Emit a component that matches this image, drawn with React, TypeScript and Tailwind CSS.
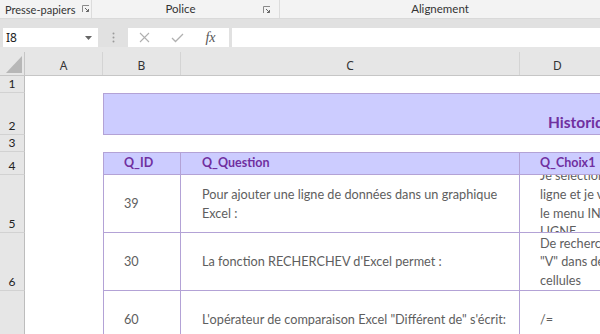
import React from "react";

const P = "border-[#b3a2d6]";

function Launcher() {
  return (
    <svg width="8" height="8" viewBox="0 0 8 8" className="block shrink-0">
      <path d="M0.5 7V0.5H7" fill="none" stroke="#8a8a8a" strokeWidth="1" />
      <path d="M3 3L6.5 6.5M4 6.5H6.5V4" fill="none" stroke="#666" strokeWidth="1" />
    </svg>
  );
}

function RowHead({ h, n }: { h: number; n: string }) {
  return (
    <div
      className="w-[25px] shrink-0 bg-[#e6e6e6] border-r border-r-[#bdbdbd] border-b border-b-[#d2d2d2] flex items-end justify-center text-[12px] leading-none text-[#222] pb-[2px]"
      style={{ height: h }}
    >
      {n}
    </div>
  );
}

const dataText = "text-[12.7px] leading-[18.6px] text-[#5e5e5e]";

export default function App() {
  return (
    <div
      className="w-[600px] h-[334px] overflow-hidden bg-white relative"
      style={{ fontFamily: "'Noto Sans', 'Open Sans', sans-serif" }}
    >
      {/* ribbon group labels */}
      <div
        className="h-[18px] bg-[#f3f3f3] flex text-[11px] leading-none text-[#333]"
        style={{ fontFamily: "Lato, 'Noto Sans', sans-serif" }}
      >
        <div className="w-[92px] shrink-0 flex items-center pl-[5px] border-r border-[#dcdcdc] gap-[6px] whitespace-nowrap overflow-hidden">
          <span>Presse-papiers</span>
          <Launcher />
        </div>
        <div className="w-[188px] shrink-0 flex items-center border-r border-[#dcdcdc] relative">
          <span className="flex-1 text-center pr-[10px] text-[11.5px]">Police</span>
          <div className="absolute right-[8px] top-[6px]">
            <Launcher />
          </div>
        </div>
        <div className="flex-1 flex items-center justify-center text-[11.5px]">Alignement</div>
      </div>
      <div className="h-[10px] bg-[#e1e1e1] border-t border-[#d9d9d9]" />
      {/* formula bar */}
      <div className="h-[19px] bg-[#e1e1e1] flex">
        <div className="ml-[3px] w-[95px] bg-white flex items-center justify-between pl-[3px] pr-[6px] text-[12px] text-[#222]">
          <span>I8</span>
          <svg width="7" height="4" viewBox="0 0 7 4">
            <path d="M0 0H7L3.5 4Z" fill="#666" />
          </svg>
        </div>
        <div className="w-[30px] flex items-center justify-center">
          <svg width="3" height="11" viewBox="0 0 3 11">
            <circle cx="1.5" cy="1.5" r="1" fill="#9a9a9a" />
            <circle cx="1.5" cy="5.5" r="1" fill="#9a9a9a" />
            <circle cx="1.5" cy="9.5" r="1" fill="#9a9a9a" />
          </svg>
        </div>
        <div className="w-[101px] bg-white flex items-center">
          <div className="w-[33px] flex justify-center">
            <svg width="11" height="11" viewBox="0 0 11 11">
              <path d="M1 1L10 10M10 1L1 10" stroke="#b0b0b0" strokeWidth="1.1" />
            </svg>
          </div>
          <div className="w-[33px] flex justify-center">
            <svg width="13" height="10" viewBox="0 0 13 10">
              <path d="M1 5L4.5 8.5L12 1" fill="none" stroke="#b0b0b0" strokeWidth="1.3" />
            </svg>
          </div>
          <div
            className="w-[33px] flex justify-center text-[14px] italic text-[#555] leading-none"
            style={{ fontFamily: "'Liberation Serif', serif" }}
          >
            fx
          </div>
        </div>
        <div className="ml-[3px] flex-1 bg-white" />
      </div>
      <div className="h-[5px] bg-[#e6e6e6]" />

      {/* column headers */}
      <div className="h-[24px] flex bg-[#e6e6e6] border-b border-[#c6c6c6] text-[12px] text-[#333]">
        <div className="w-[25px] shrink-0 border-r border-[#c6c6c6] relative">
          <svg width="16" height="17" viewBox="0 0 16 17" className="absolute right-[2px] bottom-[2px]">
            <path d="M16 0V17H0Z" fill="#b7b7b7" />
          </svg>
        </div>
        <div className="w-[78px] shrink-0 border-r border-[#d4d4d4] flex items-center justify-center pt-[4px]">A</div>
        <div className="w-[78px] shrink-0 border-r border-[#d4d4d4] flex items-center justify-center pt-[4px]">B</div>
        <div className="w-[339px] shrink-0 border-r border-[#d4d4d4] flex items-center justify-center pt-[4px]">C</div>
        <div className="w-[160px] shrink-0 flex items-center justify-start pl-[33px] pt-[4px]">D</div>
      </div>

      <div style={{ fontFamily: "Lato, 'Open Sans', sans-serif" }}>
        {/* row 1 */}
        <div className="flex">
          <RowHead h={17} n="1" />
          <div className="flex-1" />
        </div>
        {/* row 2 */}
        <div className="flex">
          <RowHead h={42} n="2" />
          <div className="w-[78px] shrink-0" />
          <div
            className={`flex-1 h-[42px] bg-[#ccccff] border-t border-b border-l ${P} flex items-end pl-[444px] pb-[3px] overflow-hidden`}
          >
            <span className="text-[15.5px] font-bold text-[#7030a0] whitespace-nowrap leading-none pb-[1px]">
              Historique des questions
            </span>
          </div>
        </div>
        {/* row 3 */}
        <div className="flex">
          <RowHead h={17} n="3" />
          <div className="flex-1" />
        </div>
        {/* row 4 header */}
        <div className="flex">
          <RowHead h={23} n="4" />
          <div className="w-[78px] shrink-0" />
          <div className={`w-[78px] shrink-0 h-[23px] bg-[#ccccff] border ${P} flex items-center pl-[20px] text-[12.5px] font-bold text-[#7030a0]`}>
            Q_ID
          </div>
          <div className={`w-[339px] shrink-0 h-[23px] bg-[#ccccff] border-t border-b border-r ${P} flex items-center pl-[21px] text-[12.5px] font-bold text-[#7030a0]`}>
            Q_Question
          </div>
          <div className={`w-[160px] shrink-0 h-[23px] bg-[#ccccff] border-t border-b border-r ${P} flex items-center pl-[20px] text-[12.5px] font-bold text-[#7030a0]`}>
            Q_Choix1
          </div>
        </div>
        {/* data rows */}
        {[
          {
            n: "5",
            id: "39",
            q: ["Pour ajouter une ligne de données dans un graphique", "Excel :"],
            c: ["Je sélectionne la", "ligne et je vais dans", "le menu INSERTION /", "LIGNE"],
          },
          {
            n: "6",
            id: "30",
            q: ["La fonction RECHERCHEV d'Excel permet :"],
            c: ["De rechercher en", "\"V\" dans des plages de", "cellules"],
          },
          {
            n: "7",
            id: "60",
            q: ["L'opérateur de comparaison Excel \"Différent de\" s'écrit:"],
            c: ["/="],
          },
        ].map((r) => (
          <div className="flex" key={r.n}>
            <RowHead h={58} n={r.n} />
            <div className="w-[78px] shrink-0" />
            <div className={`w-[78px] shrink-0 h-[58px] border-l border-r border-b ${P} flex items-center pl-[20px] ${dataText}`}>
              {r.id}
            </div>
            <div className={`w-[339px] shrink-0 h-[58px] border-r border-b ${P} flex flex-col justify-center pl-[21px] ${dataText}`}>
              {r.q.map((l, i) => (
                <div key={i} className="whitespace-nowrap">{l}</div>
              ))}
            </div>
            <div className={`w-[160px] shrink-0 h-[58px] border-r border-b ${P} flex flex-col justify-center pl-[20px] overflow-hidden ${dataText}`}>
              {r.c.map((l, i) => (
                <div key={i} className="whitespace-nowrap">{l}</div>
              ))}
            </div>
          </div>
        ))}
      </div>
    </div>
  );
}
